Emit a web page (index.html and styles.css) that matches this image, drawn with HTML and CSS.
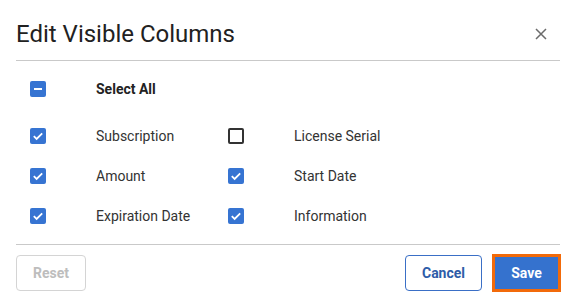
FILE: index.html
```html
<!DOCTYPE html>
<html>
<head>
<meta charset="utf-8">
<link rel="stylesheet" href="styles.css">
</head>
<body>
<div class="dialog">
  <div class="header">
    <h1 class="title">Edit Visible Columns</h1>
    <button class="close" aria-label="Close">
      <svg width="12" height="12" viewBox="0 0 12 12"><path d="M1 1L11 11M11 1L1 11" stroke="#6b6b6b" stroke-width="1.5" fill="none"/></svg>
    </button>
  </div>
  <div class="body">
    <div class="select-all">
      <span class="cb checked">
        <svg width="16" height="16" viewBox="0 0 16 16"><rect x="4" y="7" width="8" height="2" fill="#fff"/></svg>
      </span>
      <span class="label bold">Select All</span>
    </div>
    <div class="grid">
      <div class="item"><span class="cb checked"><svg width="16" height="16" viewBox="0 0 16 16"><path d="M3.8 8.2L6.6 10.9L12.2 5.3" stroke="#fff" stroke-width="1.8" fill="none"/></svg></span><span class="label">Subscription</span></div>
      <div class="item"><span class="cb"></span><span class="label">License Serial</span></div>
      <div class="item"><span class="cb checked"><svg width="16" height="16" viewBox="0 0 16 16"><path d="M3.8 8.2L6.6 10.9L12.2 5.3" stroke="#fff" stroke-width="1.8" fill="none"/></svg></span><span class="label">Amount</span></div>
      <div class="item"><span class="cb checked"><svg width="16" height="16" viewBox="0 0 16 16"><path d="M3.8 8.2L6.6 10.9L12.2 5.3" stroke="#fff" stroke-width="1.8" fill="none"/></svg></span><span class="label">Start Date</span></div>
      <div class="item"><span class="cb checked"><svg width="16" height="16" viewBox="0 0 16 16"><path d="M3.8 8.2L6.6 10.9L12.2 5.3" stroke="#fff" stroke-width="1.8" fill="none"/></svg></span><span class="label">Expiration Date</span></div>
      <div class="item"><span class="cb checked"><svg width="16" height="16" viewBox="0 0 16 16"><path d="M3.8 8.2L6.6 10.9L12.2 5.3" stroke="#fff" stroke-width="1.8" fill="none"/></svg></span><span class="label">Information</span></div>
    </div>
  </div>
  <div class="footer">
    <button class="btn reset" disabled>Reset</button>
    <div class="spacer"></div>
    <button class="btn cancel">Cancel</button>
    <button class="btn save">Save</button>
  </div>
</div>
</body>
</html>
```

FILE: styles.css
```css
* { box-sizing: border-box; }
html, body { margin: 0; padding: 0; background: #fff; }
body { font-family: Roboto, "Liberation Sans", sans-serif; color: #333; }
.dialog { width: 575px; height: 307px; padding: 0 15px 0 16px; display: flex; flex-direction: column; }
.header { height: 61px; padding-top: 8px; display: flex; align-items: center; justify-content: space-between; border-bottom: 1px solid #c9c9c9; }
.title { margin: 0; font-size: 24px; font-weight: 400; color: #212121; line-height: 28px; }
.close { background: none; border: 0; padding: 0; width: 12px; height: 12px; margin-right: 13px; display: flex; }
.body { padding: 8px 0 0 14px; height: 184px; border-bottom: 1px solid #c9c9c9; }
.select-all { height: 40px; display: flex; align-items: center; gap: 50px; margin-bottom: 7px; }
.grid { display: grid; grid-template-columns: 198px 198px; grid-auto-rows: 40px; }
.item { display: flex; align-items: center; gap: 50px; }
.cb { width: 16px; height: 16px; border: 2px solid #333; border-radius: 2px; flex: none; display: flex; }
.cb.checked { border: 0; background: #3674d2; }
.label { font-size: 14px; color: #333; }
.bold { font-weight: 700; color: #222; }
.footer { flex: 1; display: flex; align-items: flex-start; padding-top: 10px; gap: 10px; }
.spacer { flex: 1; }
.btn { font-family: Roboto, "Liberation Sans", sans-serif; font-size: 14px; font-weight: 700; height: 36px; border-radius: 4px; background: #fff; padding: 0; }
.reset { width: 70px; border: 1px solid #d4d4d4; color: #bdbdbd; }
.cancel { width: 77px; border: 1px solid #3a6fc6; color: #2d5ca8; }
.save { width: 69px; height: 38px; margin-top: -1px; margin-right: -1px; border: 3px solid #f26a0a; border-radius: 0; background: #3572ce; color: #fff; }
```
